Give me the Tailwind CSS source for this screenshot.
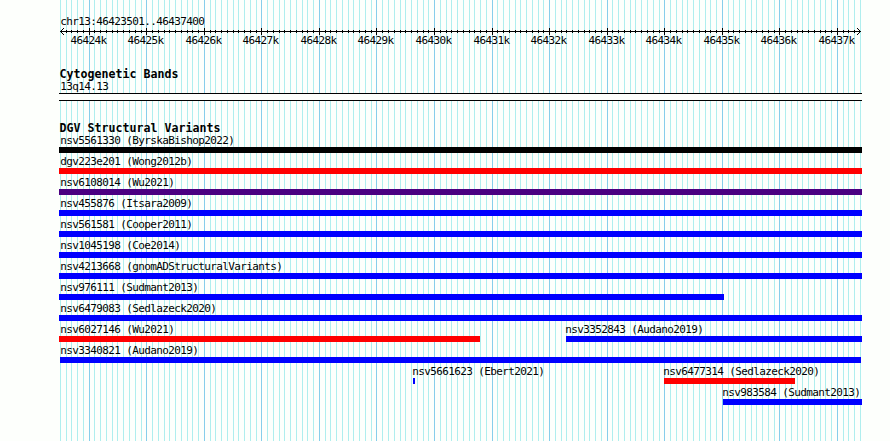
<!DOCTYPE html>
<html lang="en">
<head>
<meta charset="utf-8">
<title>chr13:46423501..46437400</title>
<script src="https://cdn.jsdelivr.net/npm/@tailwindcss/browser@4"></script>
</head>
<body class="bg-[#fdfffc]">
<main class="relative w-[890px] h-[441px] overflow-hidden text-black font-['DejaVu_Sans_Mono',monospace] text-[11px] tracking-[-0.622px] whitespace-nowrap">
  <svg class="absolute inset-0" width="890" height="441" shape-rendering="crispEdges" aria-hidden="true"><g id="grid"></g></svg>
  <div class="relative flex flex-col w-[803px] ml-[59px] pt-[14px]">
    <div class="h-[14px] leading-[15px] pl-[1.2px]">chr13:46423501..46437400</div>
    <svg class="-ml-[59px] block" width="890" height="7" shape-rendering="crispEdges" fill="none" stroke="#000">
      <path d="M60 3.5H861"/>
      <path d="M61.5 2v1M62.5 1v1M63.5 0v1M61.5 4v1M62.5 5v1M63.5 6v1M859.5 2v1M858.5 1v1M857.5 0v1M859.5 4v1M858.5 5v1M857.5 6v1"/>
      <g id="ticks"></g>
    </svg>
    <div id="labels" class="relative h-[13px] leading-[11px]"></div>
    <h2 class="mt-[19px] h-[14px] leading-[14px] pl-[0.5px] font-bold text-[11.6px] tracking-[0.015px]">Cytogenetic Bands</h2>
    <div class="h-[12px] leading-[12px] pl-[1.2px]">13q14.13</div>
    <div class="h-[8px] border-y border-black bg-[#fdfffc]"></div>
    <h2 class="mt-[20px] h-[11px] leading-[14px] pl-[0.5px] font-bold text-[11.6px] tracking-[0.015px]">DGV Structural Variants</h2>
    <section id="tracks" class="flex flex-col"></section>
  </div>
</main>
<script>
const start = 23501, scale = 800 / 13900;
const px = bp => Math.round(60 + (bp - start) * scale);
let grid = '', ticks = '', labels = '';
for (let bp = 23500; bp <= 37400; bp += 100) {
  const major = bp % 1000 === 0, x = px(bp);
  grid += `<rect x="${x}" y="0" width="1" height="441" fill="${major ? '#87ceeb' : '#afeeee'}"/>`;
  if (bp > 23500 && bp < 37400) ticks += `<path d="M${x + .5} ${major ? '0v7' : '2v3'}"/>`;
  if (major) labels += `<span class="absolute top-0" style="left:${x - 59 - 18.5}px">464${bp / 1000}k</span>`;
}
document.getElementById('grid').innerHTML = grid;
document.getElementById('ticks').innerHTML = ticks;
document.getElementById('labels').innerHTML = labels;

const K = 'bg-black', R = 'bg-[#ff0000]', P = 'bg-[#4b0082]', B = 'bg-[#0000ff]';
// Each feature: label, label x, bar start, bar end, colour
const rows = [
  [['nsv5561330 (ByrskaBishop2022)', 60.2, 59, 862, K]],
  [['dgv223e201 (Wong2012b)', 60.2, 59, 862, R]],
  [['nsv6108014 (Wu2021)', 60.2, 59, 862, P]],
  [['nsv455876 (Itsara2009)', 60.2, 59, 862, B]],
  [['nsv561581 (Cooper2011)', 60.2, 59, 862, B]],
  [['nsv1045198 (Coe2014)', 60.2, 59, 862, B]],
  [['nsv4213668 (gnomADStructuralVariants)', 60.2, 59, 862, B]],
  [['nsv976111 (Sudmant2013)', 60.2, 59, 724, B]],
  [['nsv6479083 (Sedlazeck2020)', 60.2, 59, 862, B]],
  [['nsv6027146 (Wu2021)', 60.2, 59, 480, R], ['nsv3352843 (Audano2019)', 565.2, 566, 862, B]],
  [['nsv3340821 (Audano2019)', 60.2, 60, 861, B]],
  [['nsv5661623 (Ebert2021)', 412.2, 413, 415, B], ['nsv6477314 (Sedlazeck2020)', 663.2, 664, 795, R]],
  [['nsv983584 (Sudmant2013)', 722.2, 723, 862, B]]
];
document.getElementById('tracks').innerHTML = rows.map(row => {
  let at = 59;
  return '<div class="flex h-[21px]">' + row.map(([name, tx, s, e, c]) => {
    const gap = s - at; at = e;
    return `<div class="shrink-0 flex flex-col" style="margin-left:${gap}px;width:${e - s}px"><span class="h-[15px] leading-[18px]" style="margin-left:${tx - s}px">${name}</span><span class="h-[6px] ${c}"></span></div>`;
  }).join('') + '</div>';
}).join('');
</script>
</body>
</html>
